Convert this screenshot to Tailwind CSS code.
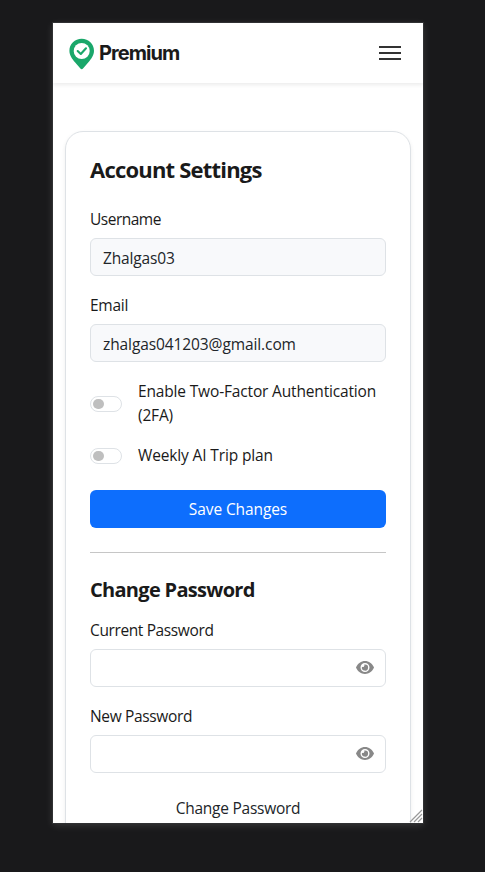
<!DOCTYPE html>
<html lang="en">
<head>
<meta charset="utf-8">
<title>Account Settings</title>
<script src="https://cdn.jsdelivr.net/npm/@tailwindcss/browser@4"></script>
</head>
<body class="h-[872px] overflow-hidden bg-[#19191b] pt-[23px] pl-[53px] font-['Open_Sans','Noto_Sans',sans-serif] text-[#1a1a1a]">
<main class="relative h-[800px] w-[370px] overflow-hidden bg-white shadow-[0_0_0_1px_#303133,0_2px_8px_#ffffff26]">
  <header class="flex h-[60px] items-center justify-between bg-white pr-[22px] pl-4 shadow-[0_2px_4px_#00000014]">
    <div class="flex items-center gap-1">
      <svg class="mt-px h-[32px] w-[26px]" viewBox="0 0 26 32" fill="none">
        <path fill="#1aa76a" d="M12.7.8C5.8.8.4 6.1.4 12.7c0 4.7 2.8 8.3 5.8 11.7l5.2 6.2c.7.8 1.9.8 2.6 0l5.2-6.2c3-3.4 5.800-7 5.800-11.700C25 6.100 19.600.8 12.700.8Z"/>
        <circle cx="12.700" cy="13" r="8" fill="#fff"/>
        <path d="m8.700 13 3.100 3 5.200-5.700" stroke="#1aa76a" stroke-width="2.100" stroke-linecap="round" stroke-linejoin="round"/>
      </svg>
      <span class="font-['Inter',sans-serif] text-[20px] leading-6 font-bold tracking-[-0.95px]">Premium</span>
    </div>
    <div class="flex w-[22px] flex-col gap-1">
      <span class="h-0.5 bg-[#333]"></span>
      <span class="h-0.5 bg-[#333]"></span>
      <span class="h-0.5 bg-[#333]"></span>
    </div>
  </header>
  <section class="mx-3 mt-12 flex h-[740px] flex-col rounded-[18px] border border-[#dee2e6] bg-white p-6 shadow-[0_2px_4px_#00000013]">
    <h1 class="mb-[22px] h-7 text-[22px] leading-[26px] font-bold tracking-[-0.8px] whitespace-nowrap">Account Settings</h1>
    <label class="mb-2 h-6 text-[15.5px] leading-[26px] tracking-[-0.5px]">Username</label>
    <div class="mb-4 h-[38px] rounded-md border border-[#dee2e6] bg-[#f8f9fb] px-3 text-[15.5px] leading-[38px] tracking-[-0.15px] text-[#212529]">Zhalgas03</div>
    <label class="mb-2 h-6 text-[15.5px] leading-[26px] tracking-[-0.25px]">Email</label>
    <div class="mb-4 h-[38px] rounded-md border border-[#dee2e6] bg-[#f8f9fb] px-3 text-[15.5px] leading-[38px] tracking-[-0.1px] text-[#212529]">zhalgas041203@gmail.com</div>
    <div class="mb-4 flex h-12 gap-4">
      <span class="mt-[18px] flex h-4 w-8 shrink-0 items-center rounded-full border border-[#dee2e6] pl-[2px]"><span class="size-[10.500px] rounded-full bg-[#bfbfbf]"></span></span>
      <span class="relative top-px text-[15.5px] leading-6 tracking-[-0.16px]"><span class="whitespace-nowrap">Enable Two-Factor Authentication</span><br>(2FA)</span>
    </div>
    <div class="mb-6 flex h-6 gap-4">
      <span class="mt-[6px] flex h-4 w-8 shrink-0 items-center rounded-full border border-[#dee2e6] pl-[2px]"><span class="size-[10.500px] rounded-full bg-[#bfbfbf]"></span></span>
      <span class="text-[15.5px] leading-[26px] tracking-[-0.14px]">Weekly AI Trip plan</span>
    </div>
    <button class="h-[38px] shrink-0 rounded-md bg-[#0d6efd] text-[15.5px] leading-[38px] tracking-[-0.1px] text-white">Save Changes</button>
    <hr class="my-6 border-[#c6c6c6]">
    <h2 class="mb-4 h-6 text-[20px] leading-[26px] font-bold tracking-[-0.7px] whitespace-nowrap">Change Password</h2>
    <label class="mb-2 h-6 text-[15.5px] leading-[26px] tracking-[-0.38px]">Current Password</label>
    <div class="mb-4 flex h-[38px] shrink-0 items-start justify-end rounded-md border border-[#dee2e6] pt-[11px] pr-[11px]">
      <svg class="h-[13px] w-[18px]" viewBox="0 0 18 13"><path fill="#888" fill-rule="evenodd" d="M9 0c4 0 7 2.400 8.800 5.900.2.400.2.800 0 1.200C16 10.600 13 13 9 13S2 10.600.2 7.100a1.300 1.300 0 0 1 0-1.200C2 2.400 5 0 9 0Zm0 2a4.500 4.500 0 1 0 0 9 4.500 4.500 0 0 0 0-9Z"/><path fill="#888" d="M9 3.400a3.100 3.100 0 1 1-3 2.300 1.600 1.600 0 0 0 2.200-2.200Z"/></svg>
    </div>
    <label class="mb-2 h-6 text-[15.5px] leading-[26px] tracking-[-0.35px]">New Password</label>
    <div class="mb-4 flex h-[38px] shrink-0 items-start justify-end rounded-md border border-[#dee2e6] pt-[11px] pr-[11px]">
      <svg class="h-[13px] w-[18px]" viewBox="0 0 18 13"><path fill="#888" fill-rule="evenodd" d="M9 0c4 0 7 2.400 8.800 5.900.2.400.2.800 0 1.200C16 10.600 13 13 9 13S2 10.600.2 7.100a1.300 1.300 0 0 1 0-1.200C2 2.400 5 0 9 0Zm0 2a4.500 4.500 0 1 0 0 9 4.500 4.500 0 0 0 0-9Z"/><path fill="#888" d="M9 3.400a3.100 3.100 0 1 1-3 2.300 1.600 1.600 0 0 0 2.200-2.200Z"/></svg>
    </div>
    <button class="h-[38px] shrink-0 text-[15.5px] leading-[38px] tracking-[-0.25px] text-[#212529]">Change Password</button>
  </section>
  <svg class="absolute right-0 bottom-0 size-[14px]" viewBox="0 0 14 14" stroke="#999" stroke-width="1.200"><path d="M1 13 13 1M5 13l8-8M9 13l4-4"/></svg>
</main>
</body>
</html>
